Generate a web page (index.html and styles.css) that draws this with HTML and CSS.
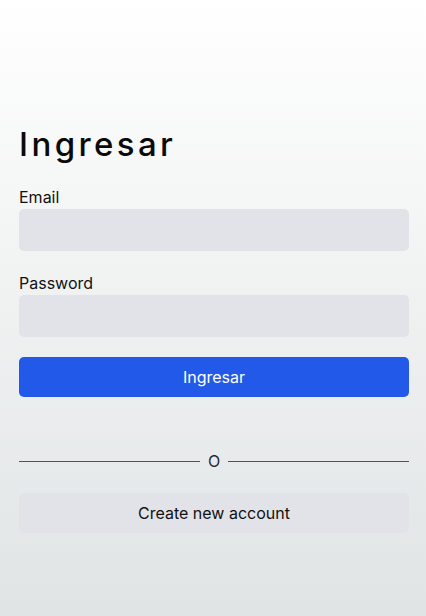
FILE: index.html
```html
<!DOCTYPE html>
<html lang="es">
<head>
<meta charset="utf-8">
<title>Ingresar</title>
<link rel="stylesheet" href="styles.css">
</head>
<body>
<main class="page">
  <h1 class="title">Ingresar</h1>
  <form class="form">
    <label class="field">
      <span class="label">Email</span>
      <input class="input" type="email">
    </label>
    <label class="field">
      <span class="label">Password</span>
      <input class="input" type="password">
    </label>
    <button class="btn btn-primary" type="button">Ingresar</button>
  </form>
  <div class="divider"><span class="line"></span><span class="or">O</span><span class="line"></span></div>
  <button class="btn btn-secondary" type="button">Create new account</button>
</main>
</body>
</html>
```

FILE: styles.css
```css
html, body {
  margin: 0;
  padding: 0;
  height: 100%;
}
body {
  background: linear-gradient(to bottom, #ffffff 0%, #f4f5f5 35%, #e0e4e5 100%);
  font-family: Inter, "Noto Sans", sans-serif;
  color: #111111;
  min-height: 616px;
}
.page {
  padding: 124px 17px 0 19px;
  display: flex;
  flex-direction: column;
}
.title {
  margin: 0;
  font-family: Inter, sans-serif;
  font-weight: 500;
  font-size: 33px;
  line-height: 40px;
  letter-spacing: 3.4px;
  color: #0a0a0a;
}
.form {
  margin-top: 21px;
  display: flex;
  flex-direction: column;
  gap: 20px;
}
.field {
  display: flex;
  flex-direction: column;
}
.label {
  font-size: 16px;
  line-height: 24px;
}
.input {
  height: 42px;
  box-sizing: border-box;
  border: none;
  border-radius: 5px;
  background: #e2e3e8;
  margin: 0;
  padding: 0 12px;
  font: inherit;
}
.btn {
  height: 40px;
  border: none;
  border-radius: 5px;
  font-family: Inter, sans-serif;
  font-size: 16px;
  width: 100%;
  margin: 0;
  padding: 0;
}
.btn-primary {
  background: #2359e8;
  color: #ffffff;
}
.btn-secondary {
  background: #e2e3e8;
  color: #111111;
}
.divider {
  margin-top: 52px;
  margin-bottom: 20px;
  height: 24px;
  display: flex;
  align-items: center;
  gap: 8px;
}
.line {
  flex: 1;
  height: 1px;
  background: #4b5563;
}
.or {
  font-size: 16px;
  line-height: 24px;
  color: #1f2937;
}
```
